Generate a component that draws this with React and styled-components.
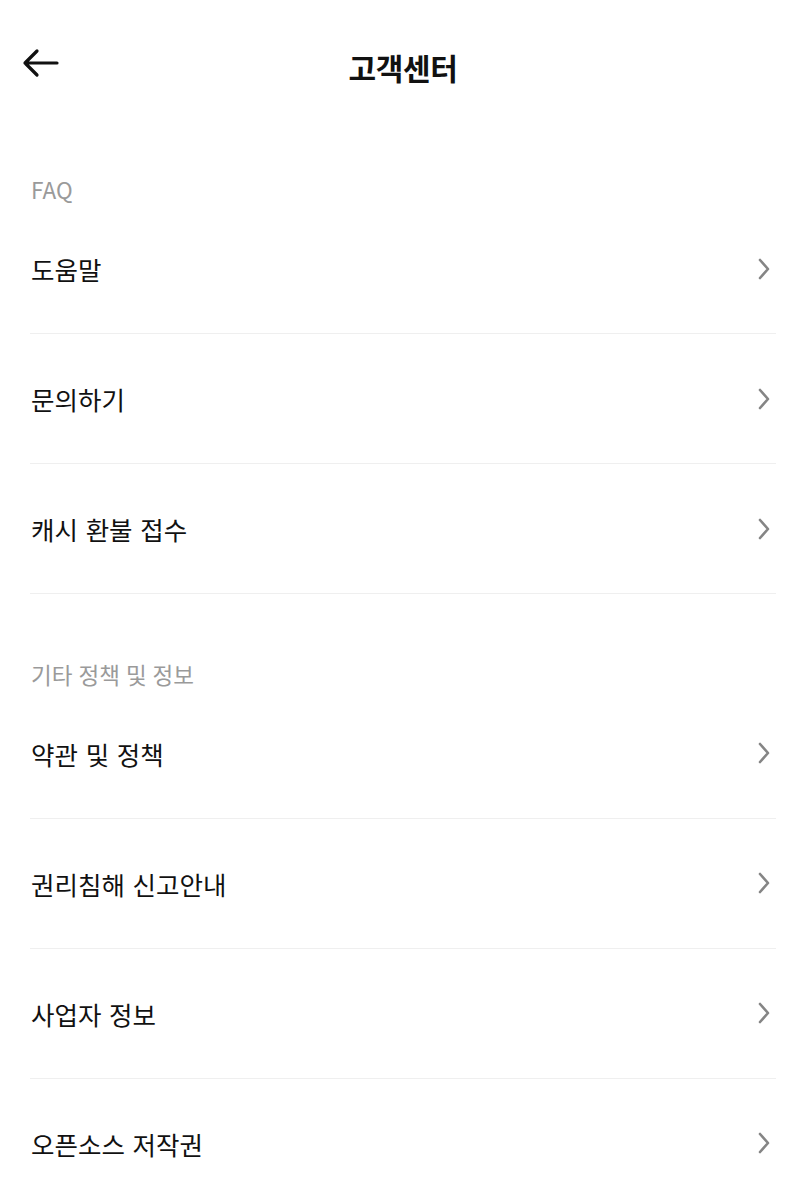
import styled, { createGlobalStyle } from "styled-components";

const GlobalStyle = createGlobalStyle`
  body {
    margin: 0;
    background: #fff;
    font-family: "Noto Sans CJK KR", "Noto Sans", sans-serif;
    color: #111;
  }
`;

const Page = styled.div`
  width: 806px;
  background: #fff;
`;

const Header = styled.header`
  position: relative;
  height: 134px;
  display: flex;
  align-items: center;
  justify-content: center;
`;

const BackButton = styled.button`
  position: absolute;
  left: 18px;
  top: 45px;
  width: 44px;
  height: 36px;
  padding: 0;
  border: none;
  background: none;
  display: flex;
  align-items: center;
  justify-content: center;
  cursor: pointer;
`;

const Title = styled.h1`
  margin: 0;
  font-size: 30px;
  font-weight: 700;
  letter-spacing: -0.3px;
  color: #111;
`;

const Section = styled.section`
  padding: 0 30px;
  margin-top: ${(p) => p.$top}px;
`;

const SectionLabel = styled.div`
  height: 28px;
  line-height: 26px;
  font-size: 22.5px;
  word-spacing: 1px;
  color: #9a9a9a;
  padding-left: 1px;
`;

const Row = styled.div`
  height: 129px;
  display: flex;
  align-items: center;
  justify-content: space-between;
  border-bottom: ${(p) => (p.$last ? "none" : "1.5px solid #efefef")};
  cursor: pointer;
`;

const RowText = styled.span`
  font-size: 25.5px;
  word-spacing: 2px;
  color: #111;
  padding-left: 1px;
`;

const Chevron = styled.svg`
  width: 14px;
  height: 22px;
  margin-right: 5px;
`;

const ArrowIcon = () => (
  <svg width="38" height="30" viewBox="0 0 38 30" fill="none">
    <path
      d="M36 15H4M16 3L4 15l12 12"
      stroke="#111"
      strokeWidth="3.2"
      strokeLinecap="round"
      strokeLinejoin="round"
    />
  </svg>
);

const ChevronIcon = () => (
  <Chevron viewBox="0 0 14 22" fill="none">
    <path
      d="M3 2l8 9-8 9"
      stroke="#858585"
      strokeWidth="2.6"
      strokeLinecap="round"
      strokeLinejoin="round"
    />
  </Chevron>
);

const sections = [
  { label: "FAQ", top: 42, items: ["도움말", "문의하기", "캐시 환불 접수"] },
  {
    label: "기타 정책 및 정보",
    top: 66.5,
    items: ["약관 및 정책", "권리침해 신고안내", "사업자 정보", "오픈소스 저작권"],
  },
];

const App = () => {
  return (
    <Page>
      <GlobalStyle />
      <Header>
        <BackButton aria-label="뒤로">
          <ArrowIcon />
        </BackButton>
        <Title>고객센터</Title>
      </Header>
      {sections.map((s, si) => (
        <Section key={s.label} $top={s.top}>
          <SectionLabel>{s.label}</SectionLabel>
          {s.items.map((item, i) => (
            <Row
              key={item}
              $last={si === sections.length - 1 && i === s.items.length - 1}
            >
              <RowText>{item}</RowText>
              <ChevronIcon />
            </Row>
          ))}
        </Section>
      ))}
    </Page>
  );
};

export default App;
